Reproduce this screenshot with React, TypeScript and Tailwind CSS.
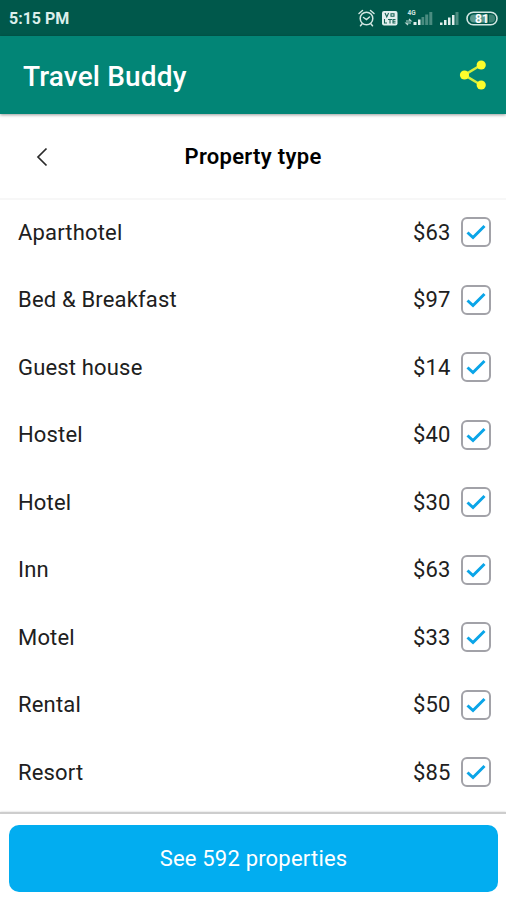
import * as React from "react";

const properties = [
  { name: "Aparthotel", price: 63 },
  { name: "Bed & Breakfast", price: 97 },
  { name: "Guest house", price: 14 },
  { name: "Hostel", price: 40 },
  { name: "Hotel", price: 30 },
  { name: "Inn", price: 63 },
  { name: "Motel", price: 33 },
  { name: "Rental", price: 50 },
  { name: "Resort", price: 85 },
];

export default function App() {
  return (
    <div className="flex h-[900px] w-[506px] flex-col overflow-hidden bg-white font-['Roboto',sans-serif] text-[#202020]">
      <StatusBar />
      <header className="z-10 flex h-[78px] shrink-0 items-center justify-between bg-[#028576] pr-[19px] pl-[23px] shadow-[0_1px_3px_rgba(0,0,0,0.4)]">
        <h1 className="pt-1 text-[28px] font-medium tracking-[0.15px] text-white">
          Travel Buddy
        </h1>
        <button aria-label="Share">
          <ShareIcon />
        </button>
      </header>
      <div className="grid h-[86px] shrink-0 grid-cols-[84px_1fr_84px] items-center border-b-2 border-[#f7f7f7]">
        <button aria-label="Back" className="flex justify-center pt-px">
          <BackIcon />
        </button>
        <h2 className="pt-px text-center text-[22px] font-semibold tracking-[0.3px] text-black">
          Property type
        </h2>
      </div>
      <ul className="flex flex-1 flex-col gap-[3.5px]">
        {properties.map((property) => (
          <PropertyRow key={property.name} {...property} />
        ))}
      </ul>
      <footer className="z-10 h-[88px] shrink-0 border-t-2 border-[#cdcdcd] bg-white pt-[11px] pr-2 pl-[9px] shadow-[0_0_2px_rgba(0,0,0,0.2)]">
        <button className="h-[67px] w-full rounded-[10px] bg-[#02adf0] text-[22px] tracking-[0.2px] text-white">
          See 592 properties
        </button>
      </footer>
    </div>
  );
}

function PropertyRow({ name, price }: { name: string; price: number }) {
  const [checked, setChecked] = React.useState(true);

  return (
    <li className="flex h-16 shrink-0 items-center pr-[15px] pl-[18px] text-[22px] tracking-[0.17px]">
      <span className="flex-1">{name}</span>
      <span className="mr-[10.5px]">${price}</span>
      <button
        role="checkbox"
        aria-checked={checked}
        aria-label={name}
        onClick={() => setChecked(!checked)}
        className="flex size-[30px] items-center justify-center rounded-[6px] border-2 border-[#a2a2a8]"
      >
        {checked ? <CheckIcon /> : null}
      </button>
    </li>
  );
}

function StatusBar() {
  return (
    <div className="flex h-9 shrink-0 items-center justify-between bg-[#00584b] pr-[7px] pl-[9px] text-white">
      <span className="pt-[2px] text-[16px] font-bold text-[#dcefeb]">
        5:15 PM
      </span>
      <StatusIcons />
    </div>
  );
}

function StatusIcons() {
  return (
    <svg width="142" height="36" viewBox="357 0 142 36" fill="none">
      {/* alarm */}
      <g stroke="#d3e7e3" strokeWidth="1.5" strokeLinecap="round">
        <circle cx="366.5" cy="18.500" r="6.300" />
        <path d="M359 13.500l3.500-3M374 13.500l-3.500-3M362 24l-1.500 1.800M371 24l1.500 1.800M363.500 17.500l3 2 3-2.500" />
      </g>
      {/* VoLTE badge */}
      <rect x="382" y="11" width="15.500" height="14.500" rx="2" fill="#e3f0ee" />
      <g stroke="#176456" strokeWidth="1.100">
        <path d="M385 13l1.800 4 1.800-4M391 13.700h3v2.600h-3zM384.500 19v4h2.500M388 19.500h4M390 19.500v4M395.500 19.500h-2.500v3.500h2.500M393 21.300h2.500" />
      </g>
      {/* mobile data */}
      <text x="407.500" y="14.500" fontSize="6.500" fontWeight="700" fill="#cfe4e0">
        4G
      </text>
      <path d="M406 21h5l-2-2M411 23h-5l2 2" stroke="#b9d7d1" strokeWidth="1.200" />
      <path d="M413.500 22h3v3h-3zM418 19.500h2.500v5.500h-2.500z" fill="#e3f0ee" />
      <path d="M421.500 17h2.700v8h-2.700zM425.200 14.500h3v10.500h-3zM429.300 12h3v13h-3z" fill="#4a8c80" />
      {/* signal */}
      <path d="M440 22.500h2.500v2.500h-2.500zM444 20h2.500v5h-2.500zM448 17.500h2.500v7.500h-2.500zM452 15h2.500v10h-2.500z" fill="#e3f0ee" />
      <path d="M455.500 12h3v13h-3z" fill="#4a8c80" />
      {/* battery */}
      <rect x="467" y="12.200" width="30" height="12.600" rx="6.300" stroke="#d3e7e3" strokeWidth="1.600" />
      <path d="M474 14.500h14v8h-14a4 4 0 0 1 0-8z" fill="#5c9a8f" />
      <path d="M489 14.500h2a4 4 0 0 1 0 8h-2z" fill="#3b8173" />
      <text x="482" y="22.800" fontSize="12" fontWeight="700" fill="#fff" textAnchor="middle">
        81
      </text>
    </svg>
  );
}

function ShareIcon() {
  return (
    <svg width="28" height="32" viewBox="459 59 28 32">
      <path d="M481 65L464.500 75L481 85" fill="none" stroke="#d4ee3c" strokeWidth="2.600" />
      <g fill="#fdfd2c">
        <circle cx="481.200" cy="65" r="4.600" />
        <circle cx="464.500" cy="75" r="4.600" />
        <circle cx="481.200" cy="85" r="4.600" />
      </g>
    </svg>
  );
}

function BackIcon() {
  return (
    <svg width="12" height="20" viewBox="0 0 12 20" fill="none">
      <path d="M10.500 1.500L2 10l8.500 8.500" stroke="#2a2a2a" strokeWidth="1.700" />
    </svg>
  );
}

function CheckIcon() {
  return (
    <svg width="20" height="16" viewBox="0 0 20 16" fill="none" className="shrink-0">
      <path d="M1.500 8.500l5.500 5L18.500 2" stroke="#0aa5e8" strokeWidth="3" />
    </svg>
  );
}
